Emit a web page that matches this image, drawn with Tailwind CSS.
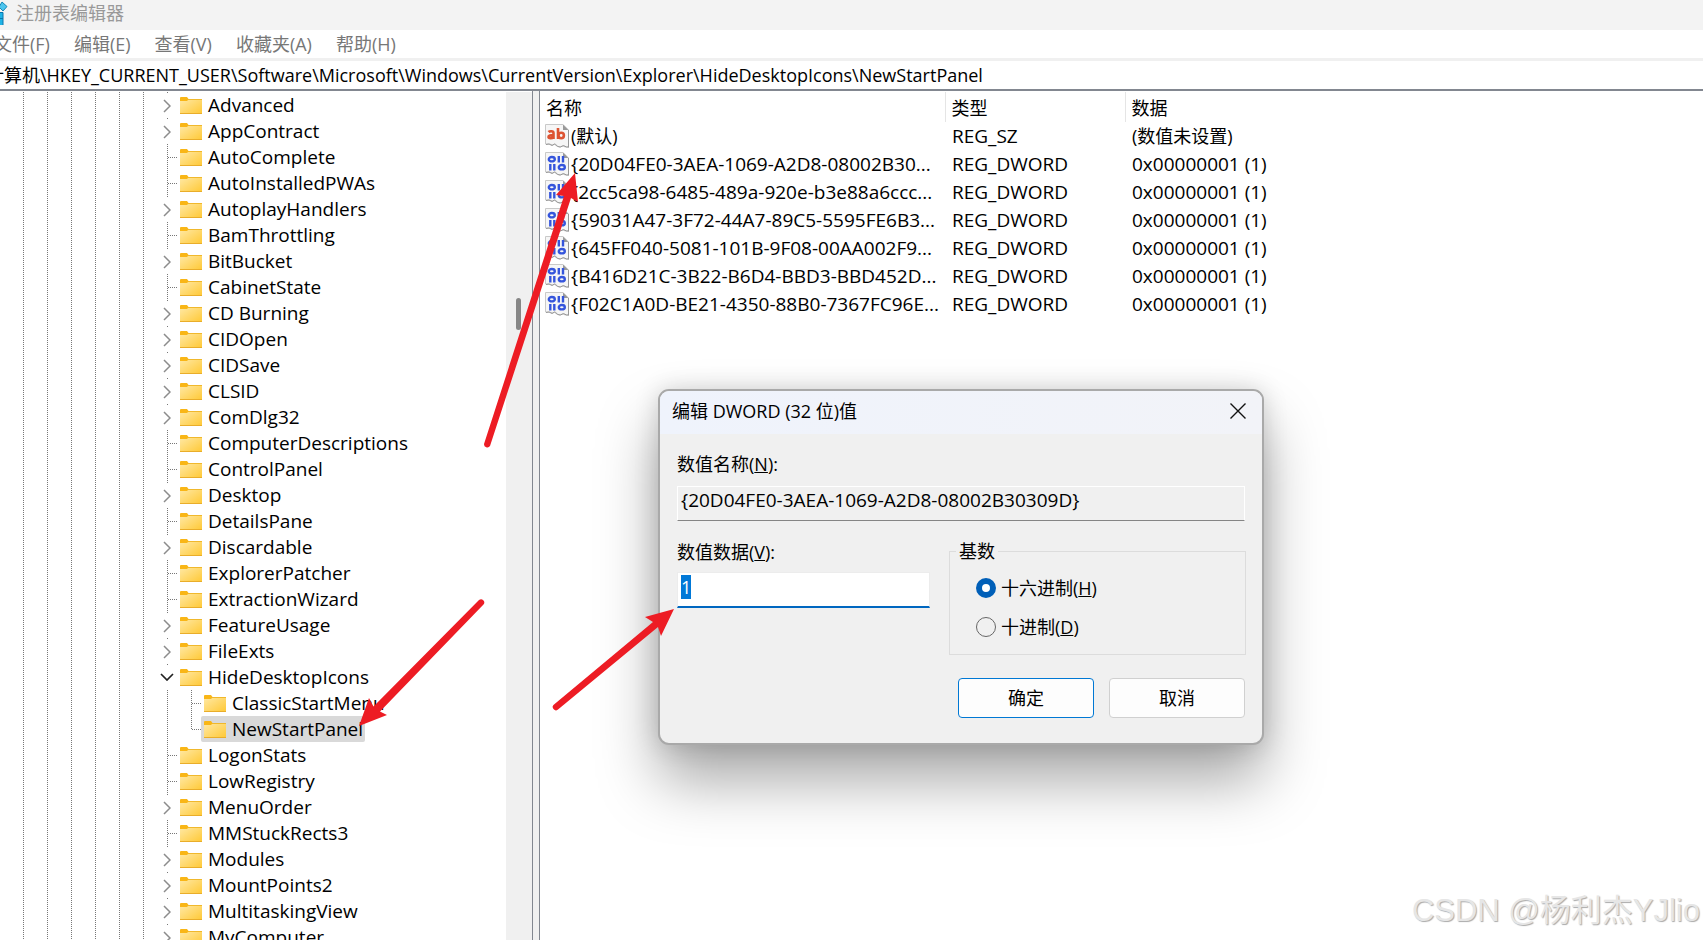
<!DOCTYPE html>
<html lang="zh-CN">
<head>
<meta charset="utf-8">
<title>注册表编辑器</title>
<script src="https://cdn.jsdelivr.net/npm/@tailwindcss/browser@4"></script>
</head>
<body class="relative h-screen overflow-hidden flex flex-col bg-white text-black text-[18px] leading-[26px] font-['Open_Sans','Noto_Sans_CJK_SC',sans-serif]">

<svg class="absolute size-0">
  <defs>
    <linearGradient id="fold" x1="0" y1="0" x2="1" y2="1"><stop offset="0" stop-color="#ffe9a6"/><stop offset="1" stop-color="#ffc937"/></linearGradient>
    <symbol id="folder" viewBox="0 0 22 17"><path d="M0 1a1 1 0 0 1 1-1h6l1.500 2v3H0z" fill="#f9b616"/><path d="M0 4h7l2-2h12a1 1 0 0 1 1 1v13.500H0z" fill="url(#fold)"/><path d="M8 2.500h14" stroke="#f0b82c"/><path d="M0 16.500h22" stroke="#e9ad2a"/></symbol>
    <symbol id="right" viewBox="0 0 8 14"><path d="M1 1l6 6-6 6" fill="none" stroke="#8c8c8c" stroke-width="1.500"/></symbol>
    <symbol id="down" viewBox="0 0 14 8"><path d="M1 1l6 6 6-6" fill="none" stroke="#222" stroke-width="1.700"/></symbol>
    <symbol id="page" viewBox="0 0 24 24"><path d="M.5.5H18L23.500 6v17h-3l-3-1-3 1-2-1-2-2-3 1-3-1H.5z" fill="#f6f6f6" stroke="#c9c9c9"/><path d="M18 .5V6h5.500z" fill="#999"/><path d="M23.500 6v17.500M1 20.500l3-.5 3 1.500 2.500-1.500 3 2.500 3 .5 3-1.500 3 1.500h2" fill="none" stroke="#979797"/></symbol>
  </defs>
</svg>

<header class="flex-none">
  <div class="flex h-[30px] items-center bg-[#f3f3f3] pb-1 text-[#999]">
    <svg class="w-4 h-[26px] flex-none" viewBox="0 0 16 26"><path d="M2 2l5 4.500-4 4.500-4-4z" fill="#4cc5ee" stroke="#1787b8"/><path d="M0 12h3v13H0z" fill="#1fb3e6"/><path d="M0 12.500h3V25M0 18.500h3" fill="none" stroke="#0b76ad"/></svg>
    <h1>注册表编辑器</h1>
  </div>
  <nav class="-ml-[6px] flex h-7 items-center gap-6 text-[#777]">
    <button>文件(F)</button><button>编辑(E)</button><button>查看(V)</button><button>收藏夹(A)</button><button>帮助(H)</button>
  </nav>
  <div class="h-[3px] bg-[#f0f0f0]"></div>
  <input aria-label="地址" class="-ml-[14px] block h-7 w-full pb-[2px] outline-none" value="计算机\HKEY_CURRENT_USER\Software\Microsoft\Windows\CurrentVersion\Explorer\HideDesktopIcons\NewStartPanel">
</header>

<main class="flex min-h-0 flex-1 border-t-2 border-[#828790]">
  <section class="flex w-[533px] flex-none overflow-hidden border-r border-[#828790] pt-px">
    <ul id="tree" class="flex-1 pl-[11px] text-[19px]"></ul>
    <div class="flex w-[26px] justify-center bg-[#f0f0f0] pt-[206px]"><div class="ml-[-1px] h-8 w-[5px] rounded-full bg-[#868686]"></div></div>
  </section>
  <div class="w-[6px] flex-none bg-[#f0f0f0]"></div>
  <section class="flex-1 border-l border-[#828790] pt-px">
    <table class="w-full table-fixed border-collapse text-left">
      <colgroup><col class="w-[405px]"><col class="w-[180px]"><col></colgroup>
      <thead><tr class="h-[30px]">
        <th class="border-r border-[#e5e5e5] pb-0 pl-[6px] pt-[2px] font-normal">名称</th><th class="border-r border-[#e5e5e5] pl-[6px] pt-[2px] font-normal">类型</th><th class="pl-[6px] pt-[2px] font-normal">数据</th>
      </tr></thead>
      <tbody id="values"></tbody>
    </table>
  </section>
</main>

<div role="dialog" aria-labelledby="dlg" class="absolute left-[658px] top-[389px] w-[606px] rounded-[11px] border-2 border-[#a9a9a9] bg-[#f0f0f0] shadow-[0_36px_60px_rgba(0,0,0,0.34),0_0_24px_rgba(0,0,0,0.16)]">
  <div class="flex h-[43px] items-center justify-between rounded-t-[9px] bg-linear-to-r from-[#eff3fc] to-[#f2f3f8] pb-[3px] pl-3 pr-4">
    <h2 id="dlg">编辑 DWORD (32 位)值</h2>
    <button aria-label="关闭"><svg class="size-4" viewBox="0 0 16 16"><path d="M.5.5l15 15M15.500.5l-15 15" stroke="#111" stroke-width="1.400"/></svg></button>
  </div>
  <form class="px-[17px] pb-[25px] pt-[17px]">
    <label for="vn" class="block">数值名称(<u>N</u>):</label>
    <input id="vn" readonly value="{20D04FE0-3AEA-1069-A2D8-08002B30309D}" class="mt-[9px] block h-[35px] w-full border border-white border-b-[#858585] bg-[#f0f0f0] pb-2 pl-[3px] text-[19px] outline-none">
    <div class="mt-[18px] flex justify-between">
      <div class="w-[253px]">
        <label for="vd" class="block">数值数据(<u>V</u>):</label>
        <input id="vd" value="1" class="mt-[7px] block h-9 w-full border border-b-2 border-[#ececec] border-b-[#0067c0] bg-white pb-[6px] pl-[3px] leading-6 outline-none selection:bg-[#0078d7] selection:text-white">
      </div>
      <fieldset class="-mr-px -mt-px h-[117px] w-[297px] border border-[#dcdcdc] pl-[26px] pt-[2px]">
        <legend class="-ml-5 px-[3px] leading-[26px]">基数</legend>
        <label class="flex h-[39px] items-center gap-[5px] pt-1"><input type="radio" name="base" checked class="size-5 appearance-none rounded-full border border-[#666] checked:border-[6px] checked:border-[#005fb8] checked:bg-white"><span>十六进制(<u>H</u>)</span></label>
        <label class="flex h-[39px] items-center gap-[5px] pt-1"><input type="radio" name="base" class="size-5 appearance-none rounded-full border border-[#666] checked:border-[6px] checked:border-[#005fb8] checked:bg-white"><span>十进制(<u>D</u>)</span></label>
      </fieldset>
    </div>
    <div class="mt-[23px] flex justify-end gap-[15px]">
      <button type="button" class="h-10 w-[136px] rounded-[4px] border border-[#0078d4] bg-[#fdfdfd]">确定</button>
      <button type="button" class="h-10 w-[136px] rounded-[4px] border border-[#d0d0d0] bg-[#fdfdfd]">取消</button>
    </div>
  </form>
</div>

<svg class="pointer-events-none absolute left-0 top-0 h-[940px] w-[1703px]" viewBox="0 0 1703 940" fill="#ed1c24">
  <path d="M484 444L564 196 556 195 575 173 578 202 571 198 490 446a3.300 3.300 0 0 1-6-2z"/>
  <path d="M483.500 604.500L380 711.500 387 715 359 726 369 698 373.500 706.500 479 600a3.200 3.200 0 0 1 4.500 4.500z"/>
  <path d="M554 704.500L653 622 645 617 674 609 661 636 658 627 558 709.500a3.200 3.200 0 0 1-4-5z"/>
</svg>
<p class="absolute bottom-2 right-[3px] text-[31px] leading-[42px] text-[#e6e6e6] [text-shadow:1px_1px_1px_#aaa] font-['Liberation_Sans','Noto_Sans_CJK_SC',sans-serif]">CSDN @杨利杰YJlio</p>

<script>
const leaf = 'AutoComplete,AutoInstalledPWAs,BamThrottling,CabinetState,ComputerDescriptions,ControlPanel,DetailsPane,ExplorerPatcher,ExtractionWizard,LogonStats,LowRegistry,MMStuckRects3'.split(',');
const names = 'Advanced,AppContract,AutoComplete,AutoInstalledPWAs,AutoplayHandlers,BamThrottling,BitBucket,CabinetState,CD Burning,CIDOpen,CIDSave,CLSID,ComDlg32,ComputerDescriptions,ControlPanel,Desktop,DetailsPane,Discardable,ExplorerPatcher,ExtractionWizard,FeatureUsage,FileExts,HideDesktopIcons,>ClassicStartMenu,>NewStartPanel,LogonStats,LowRegistry,MenuOrder,MMStuckRects3,Modules,MountPoints2,MultitaskingView,MyComputer'.split(',');
const V = 'bg-[repeating-linear-gradient(to_bottom,#777_0_1px,transparent_1px_2px)]';
const H = 'bg-[repeating-linear-gradient(to_right,#777_0_1px,transparent_1px_2px)]';
const rail = `<span class="flex h-full w-6 flex-none pl-3"><i class="h-full w-px ${V}"></i></span>`;
const branch = last => `<span class="flex h-full w-6 flex-none items-center pl-3"><i class="w-px ${last ? 'h-[14px] self-start' : 'h-full'} ${V}"></i><i class="h-px w-[10px] ${H}"></i></span>`;
const toggle = open => `<button class="relative flex h-full w-6 flex-none items-center justify-center" aria-label="展开"><i class="absolute left-3 top-0 h-px w-px bg-[#777]"></i><svg class="${open ? 'h-2 w-[14px]' : 'mt-px h-[14px] w-2'}"><use href="#${open ? 'down' : 'right'}"/></svg></button>`;
document.getElementById('tree').innerHTML = names.map(n => {
  const child = n[0] === '>', t = n.replace('>', ''), sel = t === 'NewStartPanel';
  const mark = child ? rail + branch(sel) : leaf.includes(t) ? branch(false) : toggle(t === 'HideDesktopIcons');
  return `<li class="flex h-[26px] items-center">${rail.repeat(6)}${mark}<a href="#" class="-ml-0.5 flex h-full items-center gap-[6px] whitespace-nowrap rounded-[2px] pl-[3px] pr-[2px] ${sel ? 'bg-[#d9d9d9]' : ''}"><svg class="h-[17px] w-[22px]"><use href="#folder"/></svg>${t}</a></li>`;
}).join('');
const dw = '<g fill="none" stroke="#3555dc" stroke-width="2.400"><ellipse cx="6.800" cy="7.200" rx="3" ry="2.200"/><path d="M13.800 4v6.500M18 4v6.500M5.300 12v6.500M9.300 12v6.500"/><ellipse cx="16.800" cy="15.200" rx="3" ry="2.200"/></g>';
const sz = '<g fill="none" stroke="#dd5433" stroke-width="2.600"><path d="M3.500 8c1-1 5-1.500 5 1v6M8.500 11c-3 0-5 .5-5 2s3.500 1.500 5 0M13 4v11"/><ellipse cx="16.200" cy="11.500" rx="2.700" ry="2.700"/></g>';
const vals = ['(默认)','{20D04FE0-3AEA-1069-A2D8-08002B30...','{2cc5ca98-6485-489a-920e-b3e88a6ccc...','{59031A47-3F72-44A7-89C5-5595FE6B3...','{645FF040-5081-101B-9F08-00AA002F9...','{B416D21C-3B22-B6D4-BBD3-BBD452D...','{F02C1A0D-BE21-4350-88B0-7367FC96E...'];
document.getElementById('values').innerHTML = vals.map((v, i) => `<tr class="h-7"><td class="py-0 pl-[5px]"><div class="flex items-center gap-[2px] whitespace-nowrap"><svg class="size-6 flex-none" viewBox="0 0 24 24"><use href="#page"/>${i ? dw : sz}</svg><span class="${i ? 'text-[19px]' : ''}">${v}</span></div></td><td class="py-0 pl-[7px] text-[19px]">${i ? 'REG_DWORD' : 'REG_SZ'}</td><td class="py-0 pl-[7px] ${i ? 'text-[19px]' : ''}">${i ? '0x00000001 (1)' : '(数值未设置)'}</td></tr>`).join('');
const vd = document.getElementById('vd'); vd.focus(); vd.select();
</script>
</body>
</html>
